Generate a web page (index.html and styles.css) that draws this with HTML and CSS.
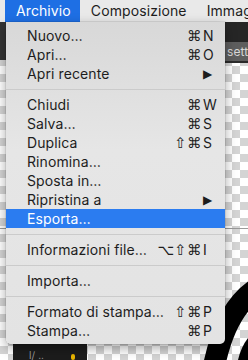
FILE: index.html
```html
<!DOCTYPE html>
<html lang="it">
<head>
  <meta charset="UTF-8" />
  <meta name="viewport" content="width=device-width, initial-scale=1.0" />
  <title>Archivio</title>
  <link rel="stylesheet" href="styles.css">
</head>

<body>
  <!-- Menu bar -->
  <div class="menubar">
    <span class="menubar-item active">Archivio</span>
    <span class="menubar-item">Composizione</span>
    <span class="menubar-item">Immagine</span>
  </div>

  <!-- App workspace behind the menu -->
  <div class="workspace">
    <div class="app-top"></div>
    <div class="tab">setto</div>
    <div class="canvas-edge"></div>
    <div class="left-strip"></div>
    <div class="panel"><span class="panel-text">l/ ..</span><span class="panel-dot"></span></div>
    <svg class="shape" width="248" height="360" viewBox="0 0 248 360">
      <path d="M258 288 Q 226 308 214 366" fill="none" stroke="#000" stroke-width="22"/>
      <path d="M248 338 L248 360 L238 360 Q241 347 248 338 Z" fill="#000"/>
    </svg>
  </div>

  <!-- Archivio dropdown -->
  <div class="dropdown">
    <div class="menu-row"><span class="label">Nuovo…</span><span class="mods">⌘</span><span class="letter">N</span></div>
    <div class="menu-row"><span class="label">Apri…</span><span class="mods">⌘</span><span class="letter">O</span></div>
    <div class="menu-row"><span class="label">Apri recente</span><span class="letter arrow">▶</span></div>
    <div class="sep"></div>
    <div class="menu-row"><span class="label">Chiudi</span><span class="mods">⌘</span><span class="letter">W</span></div>
    <div class="menu-row"><span class="label">Salva…</span><span class="mods">⌘</span><span class="letter">S</span></div>
    <div class="menu-row"><span class="label">Duplica</span><span class="mods">⇧⌘</span><span class="letter">S</span></div>
    <div class="menu-row"><span class="label">Rinomina…</span></div>
    <div class="menu-row"><span class="label">Sposta in…</span></div>
    <div class="menu-row"><span class="label">Ripristina a</span><span class="letter arrow">▶</span></div>
    <div class="menu-row selected"><span class="label">Esporta…</span></div>
    <div class="sep"></div>
    <div class="menu-row"><span class="label">Informazioni file…</span><span class="mods">⌥⇧⌘</span><span class="letter">I</span></div>
    <div class="sep"></div>
    <div class="menu-row"><span class="label">Importa…</span></div>
    <div class="sep"></div>
    <div class="menu-row"><span class="label">Formato di stampa…</span><span class="mods">⇧⌘</span><span class="letter">P</span></div>
    <div class="menu-row"><span class="label">Stampa…</span><span class="mods">⌘</span><span class="letter">P</span></div>
  </div>
</body>
</html>
```

FILE: styles.css
```css
body {
  margin: 0;
  width: 248px;
  height: 360px;
  overflow: hidden;
  position: relative;
  font-family: 'Inter', 'Liberation Sans', sans-serif;
  font-size: 14px;
  letter-spacing: 0.1px;
  color: #1d1d1d;
  background-color: #fff;
  background-image:
    linear-gradient(45deg, #d4d4d4 25%, transparent 25%, transparent 75%, #d4d4d4 75%),
    linear-gradient(45deg, #d4d4d4 25%, transparent 25%, transparent 75%, #d4d4d4 75%);
  background-size: 16px 16px;
  background-position: 0 2px, 8px 10px;
}

.menubar {
  height: 22px;
  background: #e9e9e9;
  display: flex;
  align-items: center;
  padding-left: 5px;
  position: relative;
  z-index: 2;
  overflow: hidden;
}

.menubar-item {
  padding: 0 9px 0 11px;
  height: 22px;
  line-height: 22px;
  white-space: nowrap;
}

.menubar-item.active {
  background: #1e6fe4;
  color: #fff;
}

.workspace {
  height: 338px;
  position: relative;
}

.app-top {
  height: 20px;
  background: #262626;
}

.tab {
  position: absolute;
  left: 224px;
  top: 20px;
  width: 30px;
  height: 19px;
  background: #5e5e5e;
  color: #d8d8d8;
  font-size: 12px;
  line-height: 19px;
  padding-left: 3px;
  border-bottom: 2px solid #2a2a2a;
}

.canvas-edge {
  position: absolute;
  left: 0;
  right: 0;
  top: 206px;
  height: 1px;
  background: #9a9a9a;
}

.left-strip {
  position: absolute;
  left: 0;
  top: 0;
  width: 8px;
  height: 38px;
  background: #333;
}

.panel {
  position: absolute;
  left: 13px;
  top: 320px;
  width: 74px;
  height: 18px;
  background: #1c1c1c;
}

.panel-text {
  position: absolute;
  left: 16px;
  top: 8px;
  font-size: 10px;
  line-height: 10px;
  color: #999;
}

.panel-dot {
  position: absolute;
  left: 58px;
  top: 12px;
  width: 4px;
  height: 6px;
  background: #e8b400;
  border-radius: 2px;
}

.shape {
  position: absolute;
  left: 0;
  top: -22px;
}

.dropdown {
  position: absolute;
  left: 6px;
  top: 22px;
  width: 219px;
  padding: 4px 0;
  background: linear-gradient(#d8d8d8, #e6e6e6 40%, #e3e3e3);
  border-radius: 0 0 5px 5px;
  box-shadow: 0 4px 12px rgba(0,0,0,0.35), 0 0 0 0.5px rgba(0,0,0,0.15);
  z-index: 3;
}

.menu-row {
  height: 19px;
  display: flex;
  align-items: center;
  padding: 0 7px 0 21px;
  white-space: nowrap;
}

.menu-row .label {
  flex: 1;
}

.menu-row.selected {
  background: #2b7cf0;
  color: #fff;
}

.mods {
  font-family: 'DejaVu Sans', sans-serif;
  font-size: 14.5px;
  letter-spacing: 0.5px;
  padding-right: 1px;
}

.letter {
  width: 15px;
}

.arrow {
  font-family: 'DejaVu Sans', sans-serif;
  font-size: 12px;
}

.sep {
  height: 12px;
  display: flex;
  align-items: center;
}

.sep::before {
  content: '';
  flex: 1;
  height: 1px;
  background: #cbcbcb;
}
```
